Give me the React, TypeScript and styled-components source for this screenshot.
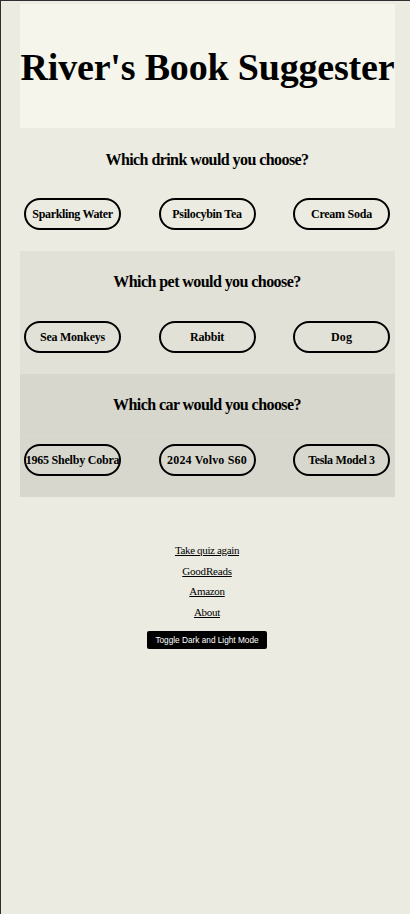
import React from "react";
import styled, { createGlobalStyle } from "styled-components";

const GlobalStyle = createGlobalStyle`
  *, *::before, *::after { box-sizing: border-box; }
  body { margin: 0; background: #ebebe1; }
`;

const Page = styled.div`
  min-height: 914px;
  padding: 3px 15px 0 19px;
  border-top: 1px solid #332d33;
  border-left: 1px solid #332d33;
  background: #ebebe1;
  color: #000;
  font-family: "Liberation Serif", serif;
`;

const Header = styled.header`
  height: 124px;
  background: #f5f5eb;
  display: flex;
  align-items: center;
  justify-content: center;
`;

const Title = styled.h1`
  margin: 2px 0 0;
  font-size: 38px;
  font-weight: 700;
  line-height: 44px;
  letter-spacing: -0.18px;
  white-space: nowrap;
`;

const Section = styled.section<{ $tone: string; $seam: string; $height: number }>`
  height: ${(p) => p.$height}px;
  background: ${(p) => p.$tone};
  display: grid;
  grid-template-rows: 62px 1fr;

  > div {
    border-top: 1px solid ${(p) => p.$seam};
  }
`;

const Question = styled.h2<{ $drop?: number }>`
  margin: 0;
  padding: ${(p) => p.$drop ?? 0}px 1px 0 0;
  text-align: center;
  font-size: 16px;
  line-height: 62px;
  letter-spacing: -0.57px;
`;

const Choices = styled.div`
  display: flex;
  justify-content: space-between;
  align-items: flex-start;
  padding: 7px 5px 0 4px;
`;

const Choice = styled.button<{ $tracking: number }>`
  width: 97px;
  height: 32px;
  padding: 0;
  display: flex;
  align-items: center;
  justify-content: center;
  border: 2px solid #000;
  border-radius: 16px;
  background: transparent;
  color: #000;
  font: 700 12px "Liberation Serif", serif;
  letter-spacing: ${(p) => p.$tracking}px;
  white-space: nowrap;
`;

const Footer = styled.footer`
  padding: 43.5px 1px 0 0;
  display: flex;
  flex-direction: column;
  align-items: center;
`;

const FooterLink = styled.a<{ $tracking: number }>`
  height: 20.6px;
  color: #000;
  font-size: 11px;
  line-height: 20.6px;
  letter-spacing: ${(p) => p.$tracking}px;
  text-decoration: underline;
`;

const Toggle = styled.button`
  width: 120px;
  height: 18px;
  margin-top: 8.5px;
  padding: 1px 0 0;
  border: 0;
  border-radius: 2px;
  background: #000;
  color: #fff;
  font: 8.25px "Liberation Sans", sans-serif;
  white-space: nowrap;
`;

type SectionData = {
  question: string;
  tone: string;
  seam: string;
  height: number;
  drop?: number;
  choices: [string, number][];
};

const sections: SectionData[] = [
  {
    question: "Which drink would you choose?",
    tone: "#ebebe1",
    seam: "transparent",
    height: 123,
    drop: 1,
    choices: [["Sparkling Water", -0.34], ["Psilocybin Tea", -0.31], ["Cream Soda", -0.25]],
  },
  {
    question: "Which pet would you choose?",
    tone: "#e1e1d7",
    seam: "#e3e3da",
    height: 123,
    choices: [["Sea Monkeys", -0.25], ["Rabbit", -0.2], ["Dog", 0.15]],
  },
  {
    question: "Which car would you choose?",
    tone: "#d7d7cd",
    seam: "#dadacf",
    height: 122.5,
    choices: [["1965 Shelby Cobra", -0.22], ["2024 Volvo S60", 0.18], ["Tesla Model 3", -0.33]],
  },
];

const links: [string, number][] = [
  ["Take quiz again", -0.36],
  ["GoodReads", -0.2],
  ["Amazon", -0.3],
  ["About", -0.28],
];

export default function App() {
  return (
    <>
      <GlobalStyle />
      <Page>
        <Header>
          <Title>River's Book Suggester</Title>
        </Header>
        {sections.map((s) => (
          <Section key={s.question} $tone={s.tone} $seam={s.seam} $height={s.height}>
            <Question $drop={s.drop}>{s.question}</Question>
            <Choices>
              {s.choices.map(([label, tracking]) => (
                <Choice key={label} $tracking={tracking}>{label}</Choice>
              ))}
            </Choices>
          </Section>
        ))}
        <Footer>
          {links.map(([label, tracking]) => (
            <FooterLink key={label} href="#" $tracking={tracking}>{label}</FooterLink>
          ))}
          <Toggle>Toggle Dark and Light Mode</Toggle>
        </Footer>
      </Page>
    </>
  );
}
